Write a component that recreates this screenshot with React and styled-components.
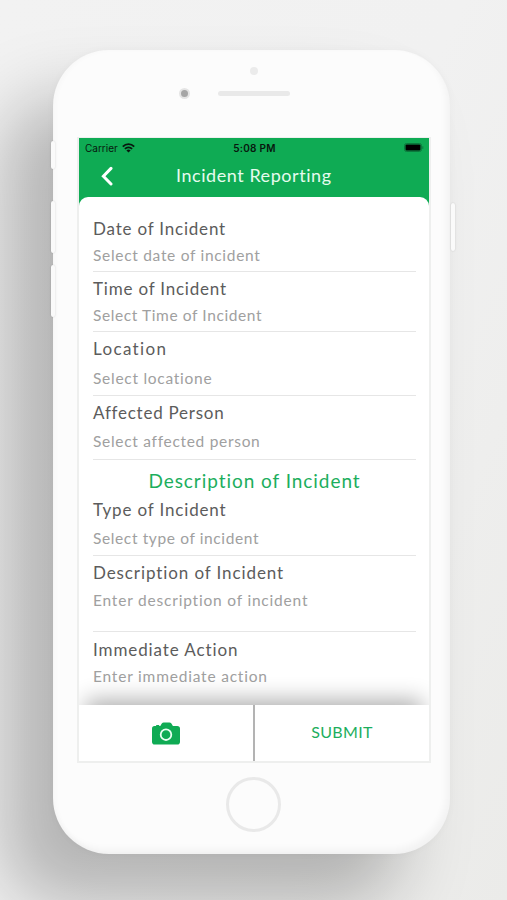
//styled
import styled, { createGlobalStyle } from 'styled-components';

const fields = [
  {
    label: 'Date of Incident',
    hint: 'Select date of incident',
    top: 22,
    gap: 6,
    bottom: 6,
    hintTrack: 0.7,
  },
  {
    label: 'Time of Incident',
    hint: 'Select Time of Incident',
    top: 7,
    gap: 6,
    bottom: 6,
    hintTrack: 0.6,
  },
  {
    label: 'Location',
    hint: 'Select locatione',
    top: 7,
    gap: 9,
    bottom: 7,
    labelTrack: 1.35,
    hintTrack: 0.73,
  },
  {
    label: 'Affected Person',
    hint: 'Select affected person',
    top: 7,
    gap: 8,
    bottom: 8,
    labelTrack: 0.75,
    hintTrack: 0.7,
  },
];

const details = [
  {
    label: 'Type of Incident',
    hint: 'Select type of incident',
    top: 8,
    gap: 8,
    bottom: 7,
    labelTrack: 0.85,
    hintTrack: 0.62,
  },
  {
    label: 'Description of Incident',
    hint: 'Enter description of incident',
    top: 7,
    gap: 7,
    bottom: 21,
    labelTrack: 0.9,
  },
  {
    label: 'Immediate Action',
    hint: 'Enter immediate action',
    top: 8,
    gap: 6,
    bottom: 26,
    labelTrack: 0.9,
  },
];

const FormField = ({ field }) => (
  <Field $top={field.top} $bottom={field.bottom}>
    <Label $track={field.labelTrack}>{field.label}</Label>
    <Hint $gap={field.gap} $track={field.hintTrack}>
      {field.hint}
    </Hint>
  </Field>
);

const App = () => {
  return (
    <Page>
      <GlobalStyle />
      <Phone>
        <SideButton $side='left' $top={91} $height={28} />
        <SideButton $side='left' $top={151} $height={52} />
        <SideButton $side='left' $top={215} $height={52} />
        <SideButton $side='right' $top={153} $height={48} />
        <TopBezel>
          <Sensor />
          <SpeakerRow>
            <Camera />
            <Speaker />
          </SpeakerRow>
        </TopBezel>
        <Screen>
          <StatusBar>
            <Carrier>
              Carrier
              <svg width='13' height='10' viewBox='0 0 13 10'>
                <g fill='none' stroke='#08170e' strokeWidth='1.8'>
                  <path d='M0.8 3.6 C4 0.3 9 0.3 12.2 3.6' />
                  <path d='M2.9 5.9 C5 3.9 8 3.9 10.1 5.9' />
                </g>
                <path d='M4.4 7.4 Q6.5 5.7 8.6 7.4 L6.5 9.6 Z' fill='#08170e' />
              </svg>
            </Carrier>
            <Clock>5:08 PM</Clock>
            <Battery>
              <svg width='20' height='10' viewBox='0 0 20 10'>
                <rect x='0.5' y='0.5' width='17' height='8' rx='2' fill='none' stroke='#0b7a3d' />
                <rect x='1.5' y='1.4' width='15' height='6.2' rx='1' fill='#000' />
                <path d='M18.8 3.3 V5.9' stroke='#0b7a3d' />
              </svg>
            </Battery>
          </StatusBar>
          <Header>
            <svg width='12' height='20' viewBox='0 0 12 20'>
              <path
                d='M10 2.4 L2.4 10.2 L10 18'
                fill='none'
                stroke='#fff'
                strokeWidth='3'
                strokeLinecap='round'
              />
            </svg>
            <Title>Incident Reporting</Title>
          </Header>
          <Form>
            {fields.map(field => (
              <FormField key={field.label} field={field} />
            ))}
            <SectionTitle>Description of Incident</SectionTitle>
            {details.map(field => (
              <FormField key={field.label} field={field} />
            ))}
          </Form>
          <Footer>
            <Action>
              <svg width='28' height='23' viewBox='0 0 28 23'>
                <path
                  d='M2.5 4 L4 4 L4.4 3 H7 L7.4 4 H8.3 L9.8 1.6 Q10.5 0.5 11.8 0.5 H17.4 Q18.7 0.5 19.4 1.6 L20.9 4 H25.2 Q28 4 28 6.8 V19.7 Q28 22.5 25.2 22.5 H2.8 Q0 22.5 0 19.7 V6.8 Q0 4 2.5 4 Z'
                  fill='#0fab54'
                />
                <circle cx='14' cy='12.7' r='5.3' fill='none' stroke='#e9fff2' strokeWidth='1.8' />
              </svg>
            </Action>
            <Action>SUBMIT</Action>
          </Footer>
        </Screen>
        <HomeButton />
      </Phone>
    </Page>
  );
};

const GlobalStyle = createGlobalStyle`
  * {
    box-sizing: border-box;
  }
  body {
    margin: 0;
    overflow: hidden;
    font-family: Lato, 'Open Sans', sans-serif;
  }
  svg {
    display: block;
  }
`;

const Page = styled.main`
  width: 507px;
  height: 900px;
  padding: 50px 0 0 53px;
  overflow: hidden;
  background: linear-gradient(115deg, #f2f2f2 0%, #f1f1f1 50%, #ebebe9 100%);
`;

const Phone = styled.div`
  position: relative;
  width: 397px;
  height: 804px;
  display: flex;
  flex-direction: column;
  align-items: center;
  border-radius: 56px;
  background: #fcfcfc;
  box-shadow: inset -4px -5px 7px rgba(0, 0, 0, 0.04),
    inset 3px 0 5px rgba(0, 0, 0, 0.02), 0 0 8px rgba(0, 0, 0, 0.03),
    -50px 50px 70px rgba(0, 0, 0, 0.25);
`;

const SideButton = styled.div`
  position: absolute;
  top: ${props => props.$top}px;
  ${props => props.$side}: ${props => (props.$side === 'left' ? -2 : -5)}px;
  width: 4px;
  height: ${props => props.$height}px;
  border-radius: 2px;
  background: #fafafa;
  box-shadow: 0 0 2px rgba(0, 0, 0, 0.16);
`;

const TopBezel = styled.div`
  width: 100%;
  height: 87px;
  flex-shrink: 0;
  display: flex;
  flex-direction: column;
  align-items: center;
  padding-top: 17px;
`;

const Sensor = styled.div`
  width: 8px;
  height: 8px;
  margin-left: 4px;
  border-radius: 50%;
  background: #ebebeb;
`;

const SpeakerRow = styled.div`
  width: 100%;
  display: flex;
  align-items: center;
  gap: 28px;
  padding-left: 126px;
  margin-top: 13px;
`;

const Camera = styled.div`
  width: 11px;
  height: 11px;
  border: 2px solid #e4e4e4;
  border-radius: 50%;
  background: #a5a5a5;
`;

const Speaker = styled.div`
  width: 72px;
  height: 5px;
  border-radius: 3px;
  background: #e9e9e9;
`;

const Screen = styled.section`
  width: 354px;
  height: 626px;
  margin-left: 5px;
  flex-shrink: 0;
  display: flex;
  flex-direction: column;
  overflow: hidden;
  border: 2px solid #eeefee;
  border-top-width: 1px;
  background: #0fab54;
`;

const StatusBar = styled.div`
  height: 19px;
  flex-shrink: 0;
  display: grid;
  grid-template-columns: 1fr auto 1fr;
  align-items: center;
  padding: 0 5px 0 6px;
  color: #08170e;
  font-family: Inter, sans-serif;
  font-size: 10px;
`;

const Carrier = styled.div`
  display: flex;
  align-items: center;
  gap: 4px;
`;

const Clock = styled.div`
  font-weight: 600;
  letter-spacing: 0.25px;
`;

const Battery = styled.div`
  display: flex;
  justify-content: flex-end;
`;

const Header = styled.header`
  height: 40px;
  flex-shrink: 0;
  display: flex;
  align-items: center;
  padding: 0 0 3px 22px;
`;

const Title = styled.h1`
  margin: -2px 0 0 63px;
  color: #e6fbee;
  font-size: 18px;
  font-weight: 400;
  letter-spacing: 0.55px;
  white-space: nowrap;
`;

const Form = styled.div`
  flex: 1;
  min-height: 0;
  overflow: hidden;
  padding: 0 13px 0 14px;
  border-radius: 9px 9px 0 0;
  background: #fff;
`;

const Field = styled.div`
  padding: ${props => props.$top}px 0 ${props => props.$bottom}px;
  border-bottom: 1px solid #e6e6e6;
`;

const Label = styled.div`
  color: #5c5c5c;
  font-size: 17px;
  line-height: 20px;
  letter-spacing: ${props => props.$track ?? 0.8}px;
  white-space: nowrap;
`;

const Hint = styled.div`
  margin-top: ${props => props.$gap}px;
  color: #a0a0a0;
  font-size: 15.5px;
  line-height: 20px;
  letter-spacing: ${props => props.$track ?? 0.8}px;
  white-space: nowrap;
`;

const SectionTitle = styled.h2`
  margin: 9px 0 0;
  color: #1cae5d;
  font-size: 19px;
  font-weight: 400;
  line-height: 23px;
  letter-spacing: 0.95px;
  text-align: center;
  white-space: nowrap;
`;

const Footer = styled.footer`
  position: relative;
  height: 56px;
  flex-shrink: 0;
  display: grid;
  grid-template-columns: 174px 1fr;
  background: #fff;
  box-shadow: 0 -12px 22px -7px rgba(0, 0, 0, 0.32);
`;

const Action = styled.div`
  display: flex;
  align-items: center;
  justify-content: center;
  color: #1cae5d;
  font-size: 16px;
  letter-spacing: 0.3px;
  & + & {
    border-left: 2px solid #b3b3b3;
    padding-bottom: 3px;
  }
`;

const HomeButton = styled.div`
  width: 55px;
  height: 55px;
  margin: 14px 0 0 4px;
  flex-shrink: 0;
  border: 3px solid #e9e9e9;
  border-radius: 50%;
`;

export default App;
